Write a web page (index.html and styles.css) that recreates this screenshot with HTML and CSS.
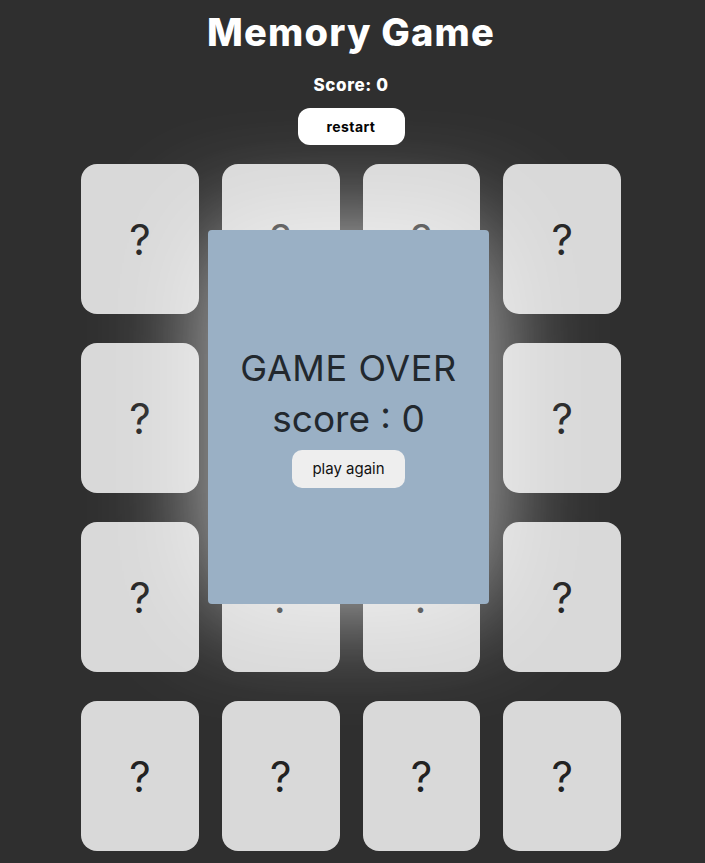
FILE: index.html
```html
<!DOCTYPE html>
<html lang="en">
<head>
<meta charset="utf-8">
<title>Memory Game</title>
<link rel="stylesheet" href="styles.css">
</head>
<body>
<main class="page">
  <h1 class="title">Memory Game</h1>
  <p class="score">Score: 0</p>
  <button class="restart">restart</button>
  <section class="board">
    <div class="card">?</div>
    <div class="card">?</div>
    <div class="card">?</div>
    <div class="card">?</div>
    <div class="card">?</div>
    <div class="card">?</div>
    <div class="card">?</div>
    <div class="card">?</div>
    <div class="card">?</div>
    <div class="card">?</div>
    <div class="card">?</div>
    <div class="card">?</div>
    <div class="card">?</div>
    <div class="card">?</div>
    <div class="card">?</div>
    <div class="card">?</div>
  </section>
</main>
<div class="overlay">
  <h2 class="over-title">GAME OVER</h2>
  <p class="over-score">score : 0</p>
  <button class="again">play again</button>
</div>
</body>
</html>
```
FILE: styles.css
```css
* { box-sizing: border-box; }
html, body { margin: 0; padding: 0; }
body {
  background: #2f2f2f;
  font-family: Inter, "Open Sans", sans-serif;
  color: #fff;
  min-height: 863px;
}
.page {
  display: flex;
  flex-direction: column;
  align-items: center;
  padding-top: 9px;
  padding-right: 3px;
}
.title {
  margin: 0;
  font-size: 38px;
  font-weight: 800;
  line-height: 46px;
  letter-spacing: 1.2px;
}
.score {
  margin: 17px 0 0;
  font-size: 17px;
  font-weight: 800;
  line-height: 26px;
  letter-spacing: 0.6px;
}
.restart {
  margin-top: 10px;
  width: 107px;
  height: 37px;
  border: none;
  border-radius: 12px;
  background: #fff;
  color: #000;
  font-family: inherit;
  font-size: 14px;
  font-weight: 700;
  letter-spacing: 0.4px;
}
.board {
  margin-top: 19px;
  width: 540px;
  display: grid;
  grid-template-columns: repeat(4, 1fr);
  column-gap: 23px;
  row-gap: 29px;
}
.card {
  height: 150px;
  border-radius: 16px;
  background: #d9d9d9;
  color: #222;
  display: flex;
  align-items: center;
  justify-content: center;
  font-size: 42px;
  font-weight: 400;
}
.overlay {
  position: absolute;
  left: 208px;
  top: 230px;
  width: 281px;
  height: 374px;
  background: #9ab0c5;
  border-radius: 4px;
  box-shadow: 0 0 110px rgba(255, 255, 255, 0.7);
  display: flex;
  flex-direction: column;
  align-items: center;
  justify-content: center;
  color: #22282e;
  padding-bottom: 4px;
}
.over-title {
  margin: 0;
  font-size: 36px;
  font-weight: 400;
  line-height: 50px;
  letter-spacing: 0.6px;
}
.over-score {
  margin: 1px 0 0;
  font-size: 37px;
  font-weight: 400;
  line-height: 50px;
}
.again {
  margin-top: 6px;
  width: 113px;
  height: 38px;
  border: none;
  border-radius: 10px;
  background: #eeeeee;
  color: #111;
  font-family: inherit;
  font-size: 15px;
  font-weight: 400;
}
```
